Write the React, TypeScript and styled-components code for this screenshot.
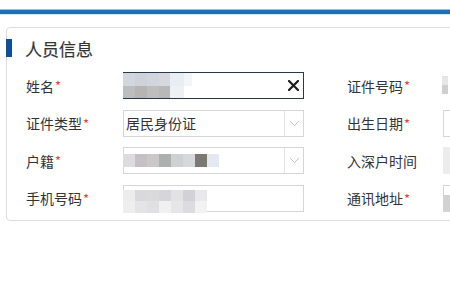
import React from 'react'
import styled, { createGlobalStyle } from 'styled-components'

const GlobalStyle = createGlobalStyle`
  html, body {
    margin: 0;
    padding: 0;
    background: #fff;
    font-family: "Microsoft YaHei", "Noto Sans CJK SC", "Noto Sans", sans-serif;
    color: #333;
  }
`

const Page = styled.div`
  width: 450px;
  height: 300px;
  overflow: hidden;
  padding-top: 9px;
  box-sizing: border-box;
`

const TopBar = styled.div`
  height: 4px;
  border-top: 1px solid #8cc6ea;
  background: #1f6fb2;
  box-shadow: 0 1px 0 #d7e9f5;
`

const Card = styled.div`
  margin: 13px 0 0 6px;
  width: 470px;
  border: 1px solid #dedede;
  border-radius: 4px;
  padding: 11px 0 8px 0;
  box-sizing: border-box;
`

const Heading = styled.div`
  display: flex;
  align-items: center;
  height: 18px;
  margin-left: -1px;
  font-size: 17px;
  color: #333;
  -webkit-text-stroke: 0.2px #333;
  &::before {
    content: '';
    width: 6px;
    height: 18px;
    background: #0f4f9a;
    margin-right: 13px;
  }
`

const Form = styled.div`
  display: grid;
  grid-template-columns: 97px 181px 43px 96px 40px;
  grid-auto-rows: 27px;
  row-gap: 10.5px;
  margin: 15px 0 0 19px;
`

const Label = styled.div`
  display: flex;
  align-items: center;
  font-size: 14px;
  color: #333;
`

const Star = styled.span`
  color: #e0443c;
  font-size: 13px;
  margin-left: 1px;
  align-self: flex-start;
  margin-top: 4px;
`

const Field = styled.div<{ $focus?: boolean; $fill?: string; $bare?: boolean }>`
  position: relative;
  border: ${(p) => (p.$bare ? 'none' : `1px solid ${p.$focus ? '#243c4a' : '#d6d6d6'}`)};
  background: ${(p) => p.$fill || '#fff'};
  box-sizing: border-box;
  display: flex;
  align-items: center;
  font-size: 14px;
  color: #333;
`

const Value = styled.span`
  padding-left: 2px;
`

const Arrow = styled.div`
  margin-left: auto;
  width: 18px;
  height: 100%;
  border-left: 1px solid #e2e2e2;
  display: flex;
  align-items: center;
  justify-content: center;
`

const Clear = styled.div`
  margin-left: auto;
  margin-right: 4px;
  display: flex;
  align-items: center;
`

const Mosaic = styled.div<{ $top: number; $h: number }>`
  position: absolute;
  left: -1px;
  top: ${(p) => p.$top}px;
  height: ${(p) => p.$h}px;
  display: flex;
  flex-direction: column;
`

const MosaicRow = styled.div`
  display: flex;
  flex: 1;
`

const Tile = styled.div<{ $c: string; $w?: number }>`
  width: ${(p) => p.$w || 12}px;
  background: ${(p) => p.$c};
`

const Chevron = () => (
  <svg width="11" height="7" viewBox="0 0 11 7">
    <path d="M1 1 L5.5 5.5 L10 1" fill="none" stroke="#c8c8c8" strokeWidth="1" />
  </svg>
)

const CloseIcon = () => (
  <svg width="11" height="11" viewBox="0 0 11 11">
    <path d="M1 1 L10 10 M10 1 L1 10" stroke="#1c1c1c" strokeWidth="2.2" strokeLinecap="square" />
  </svg>
)

const Req: React.FC<{ text: string; req?: boolean }> = ({ text, req }) => (
  <Label>
    {text}
    {req && <Star>*</Star>}
  </Label>
)

const App: React.FC = () => {
  return (
    <Page>
      <GlobalStyle />
      <TopBar />
      <Card>
        <Heading>人员信息</Heading>
        <Form>
          <Req text="姓名" req />
          <Field $focus>
            <Mosaic $top={0} $h={25}>
              <MosaicRow>
                <Tile $c="#d3d6dc" $w={12} />
                <Tile $c="#cfd2d8" $w={12} />
                <Tile $c="#d2d5db" $w={12} />
                <Tile $c="#d6d8de" $w={11} />
                <Tile $c="#e9edf4" $w={14} />
                <Tile $c="#f3f5f9" $w={8} />
              </MosaicRow>
              <MosaicRow>
                <Tile $c="#bdbdbd" $w={12} />
                <Tile $c="#b7b5b4" $w={12} />
                <Tile $c="#c0bebd" $w={12} />
                <Tile $c="#b9b8b8" $w={11} />
                <Tile $c="#eef0f3" $w={14} />
              </MosaicRow>
            </Mosaic>
            <Clear>
              <CloseIcon />
            </Clear>
          </Field>
          <div />
          <Req text="证件号码" req />
          <Field $bare>
            <Mosaic $top={4} $h={18}>
              <MosaicRow>
                <Tile $c="#e6e6e6" $w={6} />
              </MosaicRow>
              <MosaicRow>
                <Tile $c="#cfcfcf" $w={6} />
              </MosaicRow>
            </Mosaic>
          </Field>

          <Req text="证件类型" req />
          <Field>
            <Value>居民身份证</Value>
            <Arrow>
              <Chevron />
            </Arrow>
          </Field>
          <div />
          <Req text="出生日期" req />
          <Field />

          <Req text="户籍" req />
          <Field>
            <Mosaic $top={6} $h={13}>
              <MosaicRow>
                <Tile $c="#dcdcdc" $w={12} />
                <Tile $c="#c4c0c4" $w={12} />
                <Tile $c="#c8c8c8" $w={12} />
                <Tile $c="#aeb0b0" $w={12} />
                <Tile $c="#d0d0d2" $w={12} />
                <Tile $c="#d7d8dc" $w={12} />
                <Tile $c="#7c7872" $w={12} />
                <Tile $c="#e4e8f0" $w={12} />
              </MosaicRow>
            </Mosaic>
            <Arrow>
              <Chevron />
            </Arrow>
          </Field>
          <div />
          <Label>入深户时间</Label>
          <Field $bare $fill="#ececec" />

          <Req text="手机号码" req />
          <Field>
            <Mosaic $top={4} $h={23}>
              <MosaicRow>
                <Tile $c="#ececec" $w={12} />
                <Tile $c="#d9d9dc" $w={12} />
                <Tile $c="#dadadd" $w={12} />
                <Tile $c="#d6d6da" $w={12} />
                <Tile $c="#e2e2e5" $w={12} />
                <Tile $c="#d2d2d6" $w={12} />
                <Tile $c="#e8e8ea" $w={12} />
              </MosaicRow>
              <MosaicRow>
                <Tile $c="#eeeeee" $w={12} />
                <Tile $c="#e4e4e6" $w={12} />
                <Tile $c="#e0e0e3" $w={12} />
                <Tile $c="#f0f0f1" $w={12} />
                <Tile $c="#e6e6e8" $w={12} />
                <Tile $c="#dcdce0" $w={12} />
                <Tile $c="#f2f2f3" $w={12} />
              </MosaicRow>
            </Mosaic>
          </Field>
          <div />
          <Req text="通讯地址" req />
          <Field>
            <Mosaic $top={9} $h={16}>
              <MosaicRow>
                <Tile $c="#d2d2d2" $w={8} />
              </MosaicRow>
            </Mosaic>
          </Field>
        </Form>
      </Card>
    </Page>
  )
}

export default App
